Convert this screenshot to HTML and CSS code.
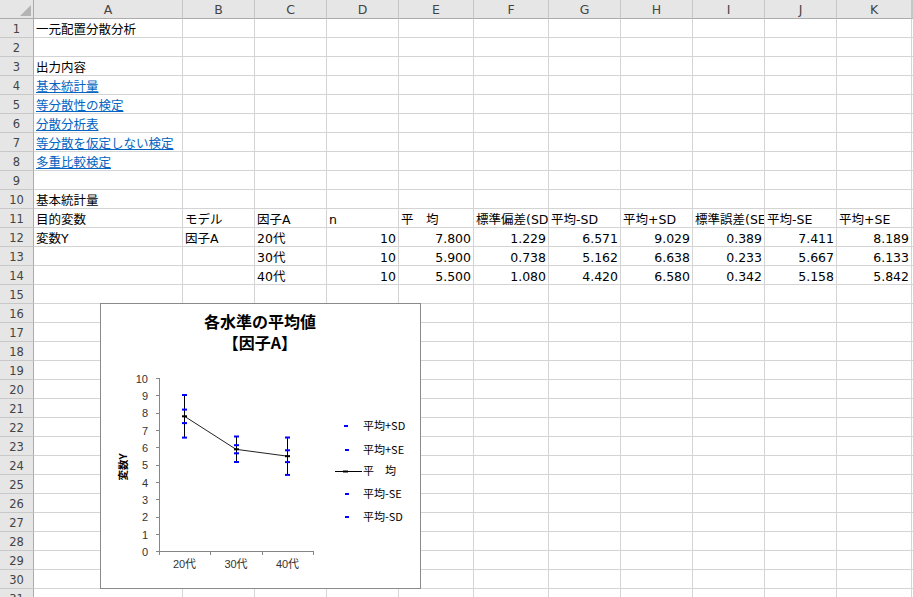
FILE: index.html
```html
<!DOCTYPE html>
<html lang="ja">
<head>
<meta charset="utf-8">
<title>一元配置分散分析</title>
<link rel="stylesheet" href="styles.css">
</head>
<body>
<div class="sheet">
  <div class="row head"><div class="corner"><span class="tri"></span></div><div>A</div><div>B</div><div>C</div><div>D</div><div>E</div><div>F</div><div>G</div><div>H</div><div>I</div><div>J</div><div>K</div><div></div></div>
  <div class="row"><div class="rh">1</div><div>一元配置分散分析</div><div></div><div></div><div></div><div></div><div></div><div></div><div></div><div></div><div></div><div></div><div></div></div>
  <div class="row"><div class="rh">2</div><div></div><div></div><div></div><div></div><div></div><div></div><div></div><div></div><div></div><div></div><div></div><div></div></div>
  <div class="row"><div class="rh">3</div><div>出力内容</div><div></div><div></div><div></div><div></div><div></div><div></div><div></div><div></div><div></div><div></div><div></div></div>
  <div class="row"><div class="rh">4</div><div><a href="#">基本統計量</a></div><div></div><div></div><div></div><div></div><div></div><div></div><div></div><div></div><div></div><div></div><div></div></div>
  <div class="row"><div class="rh">5</div><div><a href="#">等分散性の検定</a></div><div></div><div></div><div></div><div></div><div></div><div></div><div></div><div></div><div></div><div></div><div></div></div>
  <div class="row"><div class="rh">6</div><div><a href="#">分散分析表</a></div><div></div><div></div><div></div><div></div><div></div><div></div><div></div><div></div><div></div><div></div><div></div></div>
  <div class="row"><div class="rh">7</div><div><a href="#">等分散を仮定しない検定</a></div><div></div><div></div><div></div><div></div><div></div><div></div><div></div><div></div><div></div><div></div><div></div></div>
  <div class="row"><div class="rh">8</div><div><a href="#">多重比較検定</a></div><div></div><div></div><div></div><div></div><div></div><div></div><div></div><div></div><div></div><div></div><div></div></div>
  <div class="row"><div class="rh">9</div><div></div><div></div><div></div><div></div><div></div><div></div><div></div><div></div><div></div><div></div><div></div><div></div></div>
  <div class="row"><div class="rh">10</div><div>基本統計量</div><div></div><div></div><div></div><div></div><div></div><div></div><div></div><div></div><div></div><div></div><div></div></div>
  <div class="row"><div class="rh">11</div><div>目的変数</div><div>モデル</div><div>因子A</div><div>n</div><div>平　均</div><div>標準偏差(SD)</div><div>平均-SD</div><div>平均+SD</div><div>標準誤差(SE)</div><div>平均-SE</div><div>平均+SE</div><div></div></div>
  <div class="row"><div class="rh">12</div><div>変数Y</div><div>因子A</div><div>20代</div><div class="num">10</div><div class="num">7.800</div><div class="num">1.229</div><div class="num">6.571</div><div class="num">9.029</div><div class="num">0.389</div><div class="num">7.411</div><div class="num">8.189</div><div></div></div>
  <div class="row"><div class="rh">13</div><div></div><div></div><div>30代</div><div class="num">10</div><div class="num">5.900</div><div class="num">0.738</div><div class="num">5.162</div><div class="num">6.638</div><div class="num">0.233</div><div class="num">5.667</div><div class="num">6.133</div><div></div></div>
  <div class="row"><div class="rh">14</div><div></div><div></div><div>40代</div><div class="num">10</div><div class="num">5.500</div><div class="num">1.080</div><div class="num">4.420</div><div class="num">6.580</div><div class="num">0.342</div><div class="num">5.158</div><div class="num">5.842</div><div></div></div>
  <div class="row"><div class="rh">15</div><div></div><div></div><div></div><div></div><div></div><div></div><div></div><div></div><div></div><div></div><div></div><div></div></div>
  <div class="row"><div class="rh">16</div><div></div><div></div><div></div><div></div><div></div><div></div><div></div><div></div><div></div><div></div><div></div><div></div></div>
  <div class="row"><div class="rh">17</div><div></div><div></div><div></div><div></div><div></div><div></div><div></div><div></div><div></div><div></div><div></div><div></div></div>
  <div class="row"><div class="rh">18</div><div></div><div></div><div></div><div></div><div></div><div></div><div></div><div></div><div></div><div></div><div></div><div></div></div>
  <div class="row"><div class="rh">19</div><div></div><div></div><div></div><div></div><div></div><div></div><div></div><div></div><div></div><div></div><div></div><div></div></div>
  <div class="row"><div class="rh">20</div><div></div><div></div><div></div><div></div><div></div><div></div><div></div><div></div><div></div><div></div><div></div><div></div></div>
  <div class="row"><div class="rh">21</div><div></div><div></div><div></div><div></div><div></div><div></div><div></div><div></div><div></div><div></div><div></div><div></div></div>
  <div class="row"><div class="rh">22</div><div></div><div></div><div></div><div></div><div></div><div></div><div></div><div></div><div></div><div></div><div></div><div></div></div>
  <div class="row"><div class="rh">23</div><div></div><div></div><div></div><div></div><div></div><div></div><div></div><div></div><div></div><div></div><div></div><div></div></div>
  <div class="row"><div class="rh">24</div><div></div><div></div><div></div><div></div><div></div><div></div><div></div><div></div><div></div><div></div><div></div><div></div></div>
  <div class="row"><div class="rh">25</div><div></div><div></div><div></div><div></div><div></div><div></div><div></div><div></div><div></div><div></div><div></div><div></div></div>
  <div class="row"><div class="rh">26</div><div></div><div></div><div></div><div></div><div></div><div></div><div></div><div></div><div></div><div></div><div></div><div></div></div>
  <div class="row"><div class="rh">27</div><div></div><div></div><div></div><div></div><div></div><div></div><div></div><div></div><div></div><div></div><div></div><div></div></div>
  <div class="row"><div class="rh">28</div><div></div><div></div><div></div><div></div><div></div><div></div><div></div><div></div><div></div><div></div><div></div><div></div></div>
  <div class="row"><div class="rh">29</div><div></div><div></div><div></div><div></div><div></div><div></div><div></div><div></div><div></div><div></div><div></div><div></div></div>
  <div class="row"><div class="rh">30</div><div></div><div></div><div></div><div></div><div></div><div></div><div></div><div></div><div></div><div></div><div></div><div></div></div>
  <div class="row"><div class="rh">31</div><div></div><div></div><div></div><div></div><div></div><div></div><div></div><div></div><div></div><div></div><div></div><div></div></div>

  <div class="chart">
    <svg width="319" height="284" viewBox="1 1 319 284" xmlns="http://www.w3.org/2000/svg">
      <text class="ttl" x="160" y="25" text-anchor="middle">各水準の平均値</text>
      <text class="ttl" x="160" y="46" text-anchor="middle">【因子A】</text>

      <g class="axis">
        <line x1="59.5" y1="75" x2="59.5" y2="249"/>
        <line x1="59" y1="248.5" x2="214" y2="248.5"/>
        <line x1="56" y1="248.5" x2="59.5" y2="248.5"/>
        <line x1="56" y1="231.5" x2="59.5" y2="231.5"/>
        <line x1="56" y1="214.5" x2="59.5" y2="214.5"/>
        <line x1="56" y1="196.5" x2="59.5" y2="196.5"/>
        <line x1="56" y1="179.5" x2="59.5" y2="179.5"/>
        <line x1="56" y1="162.5" x2="59.5" y2="162.5"/>
        <line x1="56" y1="144.5" x2="59.5" y2="144.5"/>
        <line x1="56" y1="127.5" x2="59.5" y2="127.5"/>
        <line x1="56" y1="110.5" x2="59.5" y2="110.5"/>
        <line x1="56" y1="92.5" x2="59.5" y2="92.5"/>
        <line x1="56" y1="75.5" x2="59.5" y2="75.5"/>
        <line x1="59.5" y1="248.5" x2="59.5" y2="252"/>
        <line x1="110.5" y1="248.5" x2="110.5" y2="252"/>
        <line x1="162.5" y1="248.5" x2="162.5" y2="252"/>
        <line x1="213.5" y1="248.5" x2="213.5" y2="252"/>
      </g>

      <g class="tick" text-anchor="end">
        <text x="48" y="252.5">0</text>
        <text x="48" y="235.5">1</text>
        <text x="48" y="218">2</text>
        <text x="48" y="200.5">3</text>
        <text x="48" y="183.5">4</text>
        <text x="48" y="166">5</text>
        <text x="48" y="148.5">6</text>
        <text x="48" y="131.5">7</text>
        <text x="48" y="114">8</text>
        <text x="48" y="96.5">9</text>
        <text x="48" y="79.5">10</text>
      </g>
      <g class="tick" text-anchor="middle">
        <text x="84.5" y="265">20代</text>
        <text x="136" y="265">30代</text>
        <text x="187.5" y="265">40代</text>
      </g>

      <text class="ytitle" transform="translate(27,164) rotate(-90)" text-anchor="middle">変数Y</text>

      <polyline class="meanline" points="84.5,113.3 136,146.3 187.5,153.2"/>

      <g class="bar">
        <line x1="84.5" y1="92" x2="84.5" y2="134.6"/>
        <line x1="136.5" y1="133.5" x2="136.5" y2="159"/>
        <line x1="187.5" y1="134.5" x2="187.5" y2="172"/>
      </g>

      <g class="cap">
        <rect x="82" y="91" width="5" height="2"/>
        <rect x="82" y="105.6" width="5" height="2"/>
        <rect x="82" y="119.1" width="5" height="2"/>
        <rect x="82" y="133.6" width="5" height="2"/>
        <rect x="134" y="132.5" width="5" height="2"/>
        <rect x="134" y="141.2" width="5" height="2"/>
        <rect x="134" y="149.3" width="5" height="2"/>
        <rect x="134" y="158" width="5" height="2"/>
        <rect x="185" y="133.5" width="5" height="2"/>
        <rect x="185" y="146.3" width="5" height="2"/>
        <rect x="185" y="158.1" width="5" height="2"/>
        <rect x="185" y="170.9" width="5" height="2"/>
      </g>
      <g class="mk">
        <rect x="82" y="112.3" width="5" height="2"/>
        <rect x="134" y="145.3" width="5" height="2"/>
        <rect x="185" y="152.2" width="5" height="2"/>
      </g>

      <g class="legend">
        <rect class="bl" x="244" y="122" width="4" height="2"/>
        <text x="263" y="127">平均+SD</text>
        <rect class="bl" x="245" y="146" width="4" height="2"/>
        <text x="263" y="151">平均+SE</text>
        <line class="lgline" x1="235" y1="168.5" x2="262" y2="168.5"/>
        <rect class="bk" x="243" y="167.5" width="5" height="2"/>
        <text x="263" y="172">平　均</text>
        <rect class="bl" x="245" y="190" width="4" height="2"/>
        <text x="263" y="195">平均-SE</text>
        <rect class="bl" x="245" y="213" width="4" height="2"/>
        <text x="263" y="218">平均-SD</text>
      </g>
    </svg>
  </div>
</div>
</body>
</html>
```

FILE: styles.css
```css
html, body {
  margin: 0;
  padding: 0;
  background: #ffffff;
}

body {
  font-family: "DejaVu Sans", "Noto Sans CJK JP", sans-serif;
  font-size: 12.5px;
  color: #000000;
}

.sheet {
  position: relative;
  width: 913px;
  height: 597px;
  overflow: hidden;
}

.row {
  display: grid;
  grid-template-columns: 34px 149px 72px 72px 72px 75px 75px 72px 72px 72px 72px 75px 1fr;
  height: 19px;
}

.row > div {
  box-sizing: border-box;
  height: 19px;
  border-right: 1px solid #d4d4d4;
  border-bottom: 1px solid #d4d4d4;
  padding: 0 2px;
  overflow: hidden;
  white-space: nowrap;
  line-height: 22px;
}

.row > .rh {
  background: #e6e6e6;
  border-right-color: #ababab;
  border-bottom-color: #c8c8c8;
  color: #444444;
  text-align: center;
  font-size: 11.5px;
  line-height: 20px;
  padding: 0;
}

.head > div {
  background: #e6e6e6;
  border-bottom-color: #ababab;
  border-right-color: #c6c6c6;
  color: #444444;
  text-align: center;
  line-height: 19px;
  padding: 0;
}

.head > .corner {
  border-right-color: #ababab;
  display: flex;
  justify-content: flex-end;
  align-items: flex-end;
  padding: 0 2px 2px 0;
}

.tri {
  display: block;
  width: 0;
  height: 0;
  border-left: 11px solid transparent;
  border-bottom: 11px solid #b4b4b4;
}

.num {
  text-align: right;
}

a {
  color: #0563c1;
  text-decoration: underline;
}

.chart {
  position: absolute;
  left: 100px;
  top: 303px;
  width: 321px;
  height: 286px;
  box-sizing: border-box;
  border: 1px solid #8a8a8a;
  background: #ffffff;
}

.chart svg {
  display: block;
}

.ttl {
  font-family: "Noto Sans CJK JP", sans-serif;
  font-size: 16px;
  font-weight: bold;
  fill: #000000;
}

.axis line {
  stroke: #868686;
  stroke-width: 1;
}

.tick text {
  font-family: "Liberation Sans", "Noto Sans CJK JP", sans-serif;
  font-size: 11px;
  fill: #333333;
}

.ytitle {
  font-family: "Noto Sans CJK JP", sans-serif;
  font-size: 10.5px;
  font-weight: bold;
  fill: #000000;
}

.meanline {
  fill: none;
  stroke: #222222;
  stroke-width: 1;
}

.bar line {
  stroke: #000000;
  stroke-width: 1;
}

.cap rect, .legend .bl {
  fill: #0000ff;
}

.mk rect, .legend .bk {
  fill: #000000;
}

.legend text {
  font-family: "Noto Sans CJK JP", sans-serif;
  font-size: 11px;
  fill: #000000;
}

.lgline {
  stroke: #000000;
  stroke-width: 1;
}
```
